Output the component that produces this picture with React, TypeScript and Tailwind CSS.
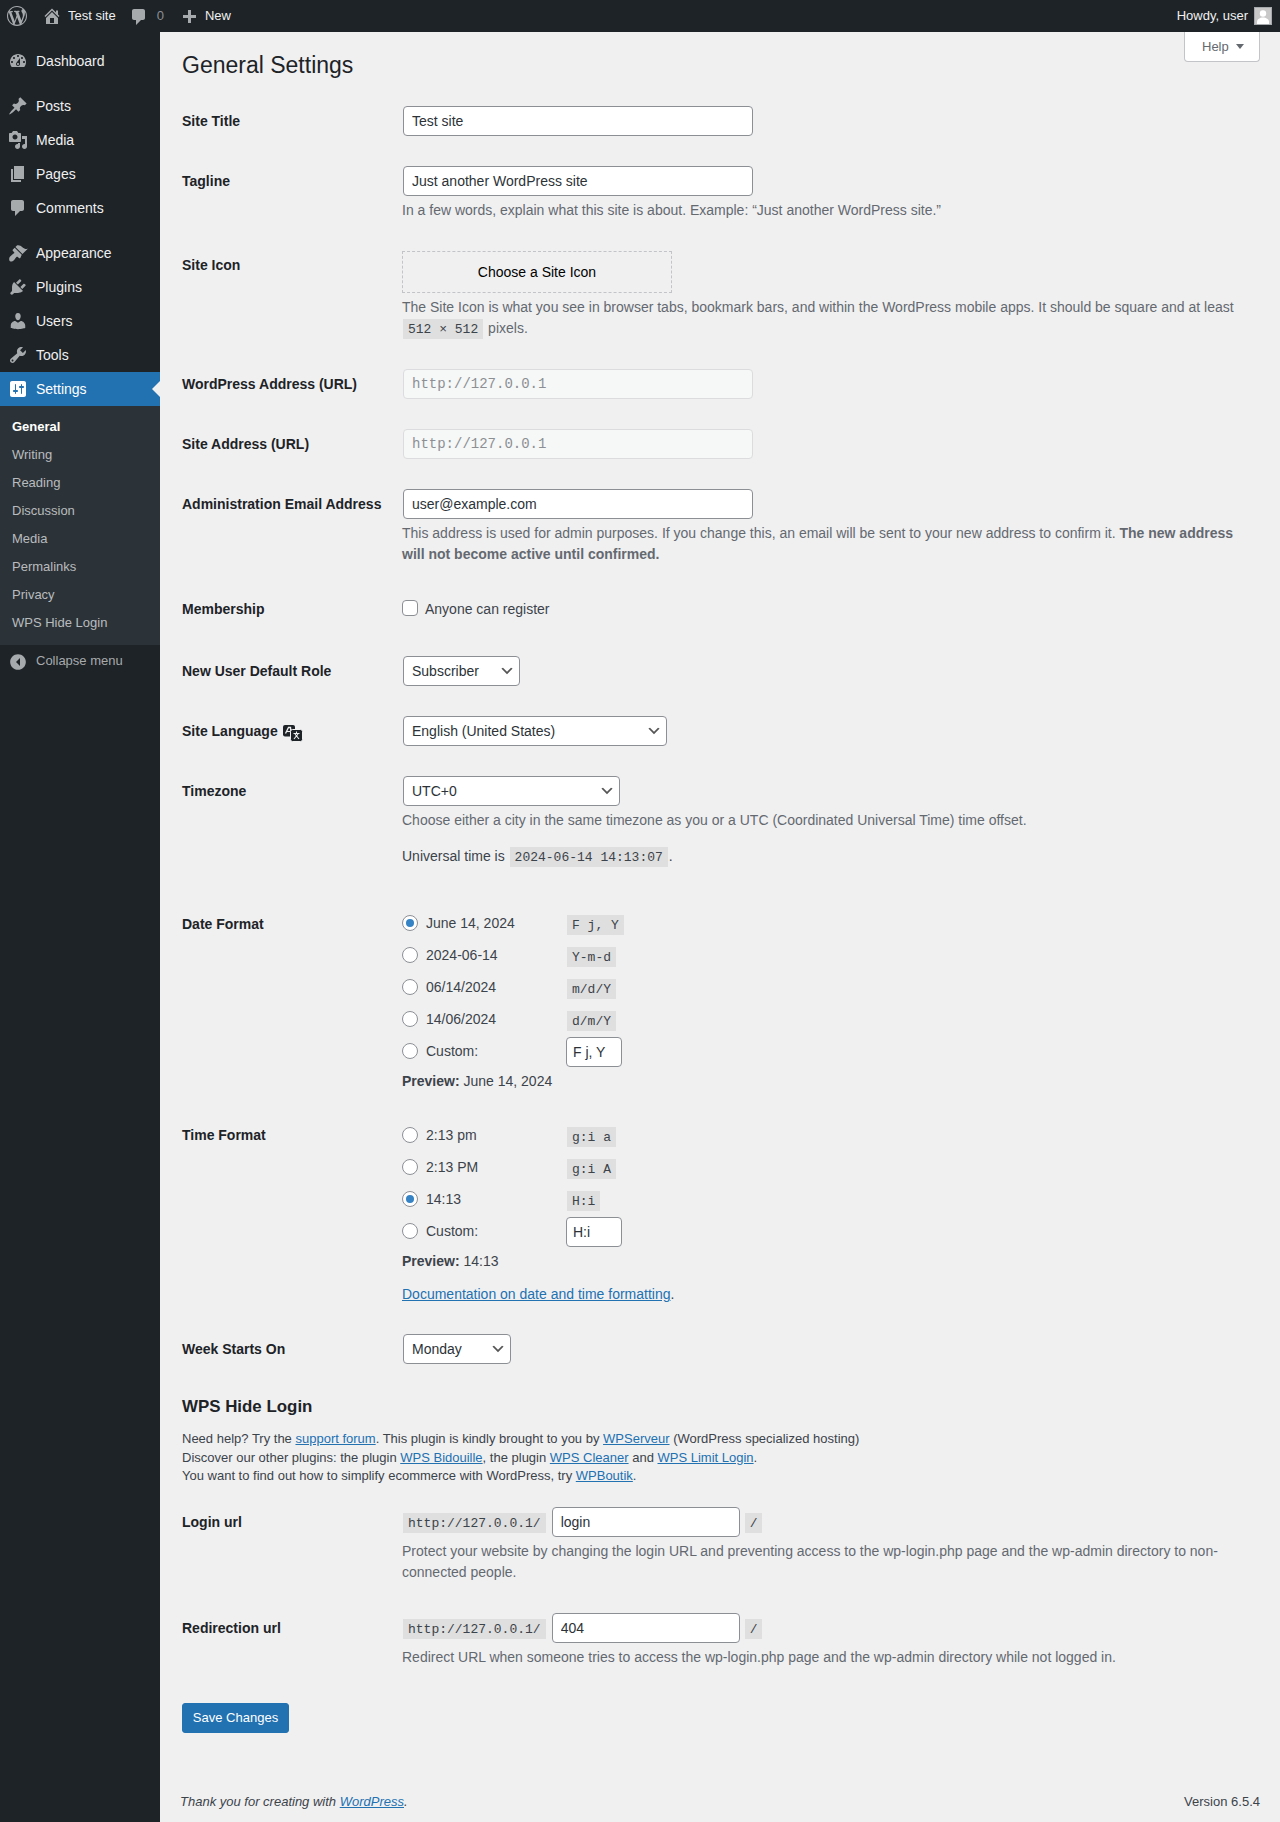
import type { ReactNode } from "react";

const icons: Record<string, string> = {
  wp: "M20 10c0-5.51-4.49-10-10-10C4.48 0 0 4.49 0 10c0 5.52 4.48 10 10 10 5.51 0 10-4.48 10-10zM7.78 15.37L4.37 6.22c.55-.02 1.17-.08 1.17-.08.5-.06.44-1.13-.06-1.11 0 0-1.45.11-2.37.11-.18 0-.37 0-.58-.01C4.12 2.69 6.89 1.06 10 1.06c2.32 0 4.43.89 6.02 2.33-.68-.11-1.64.38-1.64 1.57 0 .74.45 1.36.9 2.1.35.61.55 1.36.55 2.46 0 1.49-1.4 5-1.4 5l-3.03-8.37c.54-.02.82-.17.82-.17.5-.05.44-1.25-.06-1.22 0 0-1.44.12-2.38.12-.87 0-2.33-.12-2.33-.12-.5-.03-.56 1.2-.06 1.22l.92.08 1.26 3.41zM17.41 10c.24-.64.74-1.87.43-4.25.7 1.29 1.05 2.71 1.05 4.25 0 3.29-1.73 6.24-4.4 7.78.97-2.59 1.94-5.2 2.92-7.78zM6.1 18.09C3.12 16.65 1.06 13.57 1.06 10c0-1.31.23-2.51.72-3.63l4.32 11.72zm4.06-6.96l2.6 7.03.01.01c-.87.31-1.79.48-2.77.48-.82 0-1.62-.12-2.36-.34z",
  home: "M16 8.5l1.53 1.53-1.06 1.06L10 4.62l-6.47 6.47-1.06-1.06L10 2.5l4 4v-2h2v4zm-6-2.46l6 5.99V18H4v-5.97zM12 17v-5H8v5h4z",
  plus: "M17 9v3h-5v5H9v-5H4V9h5V4h3v5h5z",
  dashboard: "M3.76 16h12.48c1.1-1.37 1.76-3.11 1.76-5 0-4.42-3.58-8-8-8s-8 3.58-8 8c0 1.89.66 3.63 1.76 5zM10 4c.55 0 1 .45 1 1s-.45 1-1 1-1-.45-1-1 .45-1 1-1zM6 6c.55 0 1 .45 1 1s-.45 1-1 1-1-.45-1-1 .45-1 1-1zm8 0c.55 0 1 .45 1 1s-.45 1-1 1-1-.45-1-1 .45-1 1-1zm-5.37 5.55L12 7v6c0 1.1-.9 2-2 2s-2-.9-2-2c0-.57.24-1.08.63-1.45zM4 10c.55 0 1 .45 1 1s-.45 1-1 1-1-.45-1-1 .45-1 1-1zm12 0c.55 0 1 .45 1 1s-.45 1-1 1-1-.45-1-1 .45-1 1-1zm-5 3c0-.55-.45-1-1-1s-1 .45-1 1 .45 1 1 1 1-.45 1-1z",
  post: "M10.44 3.02l1.82-1.82 6.36 6.35-1.83 1.82c-1.05-.68-2.48-.57-3.41.36l-.75.75c-.92.93-1.04 2.35-.35 3.41l-1.83 1.82-2.41-2.41-2.8 2.79c-.42.42-3.38 2.71-3.8 2.29s1.86-3.39 2.28-3.81l2.79-2.79L4.1 9.36l1.83-1.82c1.05.69 2.48.57 3.4-.36l.75-.75c.93-.92 1.05-2.35.36-3.41z",
  media: "M13 11V4c0-.55-.45-1-1-1h-1.67L9 1H5L3.67 3H2c-.55 0-1 .45-1 1v7c0 .55.45 1 1 1h10c.55 0 1-.45 1-1zM7 4.5c1.38 0 2.5 1.12 2.5 2.5S8.38 9.5 7 9.5 4.5 8.38 4.5 7 5.62 4.5 7 4.5zM14 6h5v10.5c0 1.38-1.12 2.5-2.5 2.5S14 17.88 14 16.5s1.12-2.5 2.5-2.5c.17 0 .34.02.5.05V9h-3V6zm-4 8.05V13h2v3.5c0 1.38-1.12 2.5-2.5 2.5S7 17.88 7 16.5 8.12 14 9.5 14c.17 0 .34.02.5.05z",
  page: "M6 15V2h10v13H6zm-1 1h8v2H3V5h2v11z",
  comment: "M5 2h9c1.1 0 2 .9 2 2v7c0 1.1-.9 2-2 2h-2l-5 5v-5H5c-1.1 0-2-.9-2-2V4c0-1.1.9-2 2-2z",
  appearance: "M14.48 11.06L7.41 3.99l1.5-1.5c.5-.56 2.3-.47 3.51.32 1.21.8 1.43 1.28 2.91 2.1 1.18.64 2.45 1.26 4.45.85zm-.71.71L6.7 4.7 4.93 6.47c-.39.39-.39 1.02 0 1.41l1.06 1.06c.39.39.39 1.03 0 1.42-.6.6-1.43 1.11-2.21 1.69-.35.26-.7.53-1.01.84C1.43 13.23.78 15.78 1.4 17.5c.62 1.72 3.17 1.07 4.5-.26.31-.31.58-.66.84-1.01.58-.78 1.09-1.61 1.69-2.21.39-.39 1.03-.39 1.42 0l1.06 1.06c.39.39 1.02.39 1.41 0z",
  plugins: "M13.11 4.36L9.87 7.6 8 5.73l3.24-3.24c.35-.34 1.05-.2 1.56.32.52.51.66 1.21.31 1.55zm-8 1.77l.91-1.12 9.01 9.01-1.19.84c-.71.71-2.63 1.16-3.82 1.16H6.14L4.9 17.26c-.59.59-1.54.59-2.12 0-.59-.58-.59-1.53 0-2.12l1.24-1.24v-3.88c0-1.13.4-3.19 1.09-3.89zm7.26 3.97l3.24-3.24c.34-.35 1.04-.21 1.55.31.52.51.66 1.21.31 1.55l-3.24 3.25z",
  users: "M10 9.25c-2.27 0-2.73-3.44-2.73-3.44C7 4.02 7.82 2 9.97 2c2.16 0 2.98 2.02 2.71 3.81 0 0-.41 3.44-2.68 3.44zm0 2.57L12.72 10c2.39 0 4.52 2.33 4.52 4.53v2.49s-3.65 1.13-7.24 1.13c-3.65 0-7.24-1.13-7.24-1.13v-2.49c0-2.25 1.94-4.48 4.47-4.48z",
  tools: "M16.68 9.77c-1.34 1.34-3.3 1.67-4.95.99l-5.41 6.52c-.99.99-2.59.99-3.58 0s-.99-2.59 0-3.57l6.52-5.42c-.68-1.65-.35-3.61.99-4.95 1.28-1.28 3.12-1.62 4.72-1.06l-2.89 2.89 2.82 2.82 2.86-2.87c.53 1.58.18 3.39-1.08 4.65zM3.81 16.21c.4.39 1.04.39 1.43 0 .4-.4.4-1.04 0-1.43-.39-.4-1.03-.4-1.43 0-.39.39-.39 1.03 0 1.43z",
  settings: "M18 16V4c0-1.1-.9-2-2-2H4c-1.1 0-2 .9-2 2v12c0 1.1.9 2 2 2h12c1.1 0 2-.9 2-2zM8 11h1c.55 0 1 .45 1 1s-.45 1-1 1H8v1.5c0 .28-.22.5-.5.5s-.5-.22-.5-.5V13H6c-.55 0-1-.45-1-1s.45-1 1-1h1V5.5c0-.28.22-.5.5-.5s.5.22.5.5V11zm5-2h-1c-.55 0-1-.45-1-1s.45-1 1-1h1V5.5c0-.28.22-.5.5-.5s.5.22.5.5V7h1c.55 0 1 .45 1 1s-.45 1-1 1h-1v5.5c0 .28-.22.5-.5.5s-.5-.22-.5-.5V9z",
  collapse: "M10 2.16c4.33 0 7.84 3.51 7.84 7.84s-3.51 7.84-7.84 7.84S2.16 14.33 2.16 10 5.67 2.16 10 2.16zM12 14V6l-4 4z",
};

function Icon({ name, className }: { name: string; className?: string }) {
  return (
    <svg viewBox="0 0 20 20" className={className} fill="currentColor" fillRule="evenodd">
      <path d={icons[name]} />
    </svg>
  );
}

function TopBar() {
  return (
    <div className="h-8 bg-[#1d2327] text-[#f0f0f1] text-[13px] flex items-center justify-between pl-[7px] pr-2">
      <div className="flex items-center">
        <Icon name="wp" className="w-5 h-5 text-[#a7aaad]" />
        <Icon name="home" className="w-5 h-5 ml-[15px] text-[#a7aaad]" />
        <span className="ml-[6px]">Test site</span>
        <Icon name="comment" className="w-5 h-5 ml-[13px] mt-[2px] text-[#a7aaad]" />
        <span className="ml-[8px] text-[#8c8f94]">0</span>
        <Icon name="plus" className="w-5 h-5 ml-[15px] text-[#a7aaad]" />
        <span className="ml-[6px]">New</span>
      </div>
      <div className="flex items-center gap-[6px]">
        <span>Howdy, user</span>
        <svg viewBox="0 0 18 18" className="w-[18px] h-[18px]">
          <rect x="0.5" y="0.5" width="17" height="17" fill="#c8c8c8" stroke="#a7aaad" />
          <circle cx="9" cy="6.5" r="3.2" fill="#fff" />
          <path d="M3 17v-2c0-3 3-4.5 6-4.5s6 1.5 6 4.5v2z" fill="#fff" />
        </svg>
      </div>
    </div>
  );
}

function MenuItem({ icon, label, active }: { icon: string; label: string; active?: boolean }) {
  return (
    <div className={`relative h-[34px] flex items-center text-sm ${active ? "bg-[#2271b1] text-white" : "text-[#f0f0f1]"}`}>
      <span className="w-9 flex justify-center">
        <Icon name={icon} className={`w-5 h-5 ${active ? "text-white" : "text-[#a7aaad]"}`} />
      </span>
      <span>{label}</span>
      {active && (
        <span className="absolute right-0 top-[9px] border-y-8 border-r-8 border-y-transparent border-r-[#f0f0f1]" />
      )}
    </div>
  );
}

function Sidebar() {
  const sub = ["Writing", "Reading", "Discussion", "Media", "Permalinks", "Privacy", "WPS Hide Login"];
  return (
    <aside className="w-40 shrink-0 bg-[#1d2327] pt-3">
      <MenuItem icon="dashboard" label="Dashboard" />
      <div className="h-[11px]" />
      <MenuItem icon="post" label="Posts" />
      <MenuItem icon="media" label="Media" />
      <MenuItem icon="page" label="Pages" />
      <MenuItem icon="comment" label="Comments" />
      <div className="h-[11px]" />
      <MenuItem icon="appearance" label="Appearance" />
      <MenuItem icon="plugins" label="Plugins" />
      <MenuItem icon="users" label="Users" />
      <MenuItem icon="tools" label="Tools" />
      <MenuItem icon="settings" label="Settings" active />
      <div className="bg-[#2c3338] pt-[7px] pb-[9px] h-[239px] text-[13px] text-[#b8bcbf]">
        <div className="h-7 flex items-center px-3 font-bold text-white">General</div>
        {sub.map((s) => (
          <div key={s} className="h-7 flex items-center px-3">{s}</div>
        ))}
      </div>
      <div className="flex items-center h-[34px] text-[13px] text-[#a7aaad]">
        <span className="w-9 flex justify-center">
          <Icon name="collapse" className="w-5 h-5" />
        </span>
        <span className="-mt-[2px]">Collapse menu</span>
      </div>
    </aside>
  );
}

function Row({ label, after, children, className, labelClass }: { label: string; after?: ReactNode; children: ReactNode; className?: string; labelClass?: string }) {
  return (
    <div className={`flex ${className ?? ""}`}>
      <div className={`w-[210px] shrink-0 pb-5 pr-[10px] text-sm leading-[18.2px] font-bold text-[#1d2327] ${labelClass ?? "pt-[21px]"}`}>
        {label}
        {after}
      </div>
      <div className="flex-1 py-[15px] px-[10px] text-sm leading-[21px]">{children}</div>
    </div>
  );
}

function TextInput({ value, className }: { value: string; className?: string }) {
  return (
    <input
      readOnly
      value={value}
      className={`block mx-px h-[30px] px-2 rounded border border-[#8c8f94] bg-white text-sm text-[#2c3338] ${className ?? "w-[350px]"}`}
    />
  );
}

function UrlInput({ value }: { value: string }) {
  return (
    <input
      readOnly
      value={value}
      className="block mx-px w-[350px] h-[30px] px-2 rounded border border-[#dcdcde] bg-[#f6f7f7] text-sm text-[#8c8f94] font-['Liberation_Mono',monospace]"
    />
  );
}

function Select({ value, className }: { value: string; className: string }) {
  return (
    <div className={`relative mx-px h-[30px] ${className}`}>
      <select className="w-full h-full appearance-none pl-2 pr-6 rounded border border-[#8c8f94] bg-white text-sm text-[#2c3338]">
        <option>{value}</option>
      </select>
      <svg viewBox="0 0 20 20" className="absolute right-[5px] top-[7px] w-4 h-4 pointer-events-none" fill="#555">
        <path d="M5 6l5 5 5-5 2 1-7 7-7-7 2-1z" />
      </svg>
    </div>
  );
}

function Desc({ children }: { children: ReactNode }) {
  return <p className="mt-1 text-[#646970] text-sm leading-[21px]">{children}</p>;
}

function Code({ children, className }: { children: ReactNode; className?: string }) {
  return (
    <code className={`mx-px bg-[#dfdfdf] text-[#3c434a] pt-[3px] px-[5px] pb-[2px] text-[13px] leading-[15px] font-['Liberation_Mono',monospace] ${className ?? ""}`}>
      {children}
    </code>
  );
}

function Radio({ checked }: { checked?: boolean }) {
  return (
    <span className="w-4 h-4 shrink-0 rounded-full border border-[#8c8f94] bg-white flex items-center justify-center">
      {checked && <span className="w-2 h-2 rounded-full bg-[#3582c4]" />}
    </span>
  );
}

function FormatOption({ label, code, checked }: { label: string; code: string; checked?: boolean }) {
  return (
    <div className="flex items-center h-7 mb-1 text-[#3c434a]">
      <Radio checked={checked} />
      <span className="ml-2 w-[140px]">{label}</span>
      <Code className="mt-[4px]">{code}</Code>
    </div>
  );
}

function CustomOption({ value }: { value: string }) {
  return (
    <div className="flex items-center h-7 mb-1 text-[#3c434a]">
      <Radio />
      <span className="ml-2 w-[139px]">Custom:</span>
      <TextInput value={value} className="w-[56px] !px-[6px] mt-[2px]" />
    </div>
  );
}

function Lnk({ children }: { children: ReactNode }) {
  return <a className="text-[#2271b1] underline">{children}</a>;
}

function TranslateIcon() {
  return (
    <svg viewBox="0 0 20 20" className="inline-block w-5 h-5 ml-[5px] align-[-7px]">
      <rect x="0" y="2" width="12" height="11.5" rx="2" fill="#1d2327" />
      <path d="M2.5 10.5L5.5 4.5h2l.5 6" fill="none" stroke="#f0f0f1" strokeWidth="1.3" />
      <path d="M4 8.5h4" stroke="#f0f0f1" strokeWidth="1.1" />
      <rect x="7.5" y="6.5" width="12" height="12" rx="2" fill="#1d2327" stroke="#f0f0f1" />
      <path d="M13.5 8.5v1.500M10.500 10.500h6M15 11l-4 5M12 11l4 5" stroke="#f0f0f1" strokeWidth="1.1" fill="none" />
    </svg>
  );
}

function SettingsForm() {
  return (
    <div className="mt-[6.5px]">
      <Row label="Site Title">
        <TextInput value="Test site" />
      </Row>
      <Row label="Tagline">
        <TextInput value="Just another WordPress site" />
        <Desc>In a few words, explain what this site is about. Example: “Just another WordPress site.”</Desc>
      </Row>
      <Row label="Site Icon" labelClass="pt-5">
        <div className="w-[270px] h-[42px] border border-dashed border-[#c3c4c7] flex items-center justify-center text-black">
          Choose a Site Icon
        </div>
        <Desc>
          The Site Icon is what you see in browser tabs, bookmark bars, and within the WordPress mobile apps. It should be square and at least <Code>512 × 512</Code> pixels.
        </Desc>
      </Row>
      <Row label="WordPress Address (URL)">
        <UrlInput value="http://127.0.0.1" />
      </Row>
      <Row label="Site Address (URL)">
        <UrlInput value="http://127.0.0.1" />
      </Row>
      <Row label="Administration Email Address">
        <TextInput value="user@example.com" />
        <Desc>
          This address is used for admin purposes. If you change this, an email will be sent to your new address to confirm it. <strong>The new address will not become active until confirmed.</strong>
        </Desc>
      </Row>
      <Row label="Membership" labelClass="pt-5" className="h-[61px]">
        <div className="flex items-center h-[28px] -mt-[1px] text-[#3c434a]">
          <span className="w-4 h-4 rounded border border-[#8c8f94] bg-white" />
          <span className="ml-[7px] mt-[2px]">Anyone can register</span>
        </div>
      </Row>
      <Row label="New User Default Role">
        <Select value="Subscriber" className="w-[117px]" />
      </Row>
      <Row label="Site Language" after={<TranslateIcon />} className="h-[60px]">
        <Select value="English (United States)" className="w-[264px]" />
      </Row>
      <Row label="Timezone">
        <Select value="UTC+0" className="w-[217px]" />
        <Desc>Choose either a city in the same timezone as you or a UTC (Coordinated Universal Time) time offset.</Desc>
        <p className="mt-[15px] mb-[12px] text-[#3c434a]">
          Universal time is <Code>2024-06-14 14:13:07</Code>.
        </p>
      </Row>
      <Row label="Date Format">
        <FormatOption label="June 14, 2024" code="F j, Y" checked />
        <FormatOption label="2024-06-14" code="Y-m-d" />
        <FormatOption label="06/14/2024" code="m/d/Y" />
        <FormatOption label="14/06/2024" code="d/m/Y" />
        <CustomOption value="F j, Y" />
        <p className="mt-[6px] -mb-px text-[#3c434a]">
          <strong>Preview:</strong> June 14, 2024
        </p>
      </Row>
      <Row label="Time Format" labelClass="pt-5">
        <FormatOption label="2:13 pm" code="g:i a" />
        <FormatOption label="2:13 PM" code="g:i A" />
        <FormatOption label="14:13" code="H:i" checked />
        <CustomOption value="H:i" />
        <p className="mt-[6px] text-[#3c434a]">
          <strong>Preview:</strong> 14:13
        </p>
        <p className="mt-3 -mb-px text-[#3c434a]">
          <Lnk>Documentation on date and time formatting</Lnk>.
        </p>
      </Row>
      <Row label="Week Starts On">
        <Select value="Monday" className="w-[108px]" />
      </Row>
    </div>
  );
}

function UrlField({ value }: { value: string }) {
  return (
    <div className="flex items-center gap-1 h-[30px]">
      <Code className="mt-[2px]">http://127.0.0.1/</Code>
      <TextInput value={value} className="w-[188px]" />
      <Code className="mt-[2px] !ml-0">/</Code>
    </div>
  );
}

function HideLogin() {
  return (
    <div>
      <h2 className="text-[16.9px] leading-[23px] font-bold text-[#1d2327] mt-4">WPS Hide Login</h2>
      <p className="mt-3 text-[13px] leading-[18.2px] text-[#3c434a]">
        Need help? Try the <Lnk>support forum</Lnk>. This plugin is kindly brought to you by <Lnk>WPServeur</Lnk> (WordPress specialized hosting)
        <br />
        Discover our other plugins: the plugin <Lnk>WPS Bidouille</Lnk>, the plugin <Lnk>WPS Cleaner</Lnk> and <Lnk>WPS Limit Login</Lnk>.
        <br />
        You want to find out how to simplify ecommerce with WordPress, try <Lnk>WPBoutik</Lnk>.
      </p>
      <div className="mt-[7px]">
        <Row label="Login url">
          <UrlField value="login" />
          <Desc>Protect your website by changing the login URL and preventing access to the wp-login.php page and the wp-admin directory to non-connected people.</Desc>
        </Row>
        <Row label="Redirection url">
          <UrlField value="404" />
          <Desc>Redirect URL when someone tries to access the wp-login.php page and the wp-admin directory while not logged in.</Desc>
        </Row>
      </div>
      <button className="mt-5 h-[30px] w-[107px] rounded-[3px] bg-[#2271b1] border border-[#2271b1] text-white text-[13px]">
        Save Changes
      </button>
    </div>
  );
}

export default function App() {
  return (
    <div className="min-h-[1822px] flex flex-col bg-[#f0f0f1] font-['Liberation_Sans',Arial,sans-serif] text-[#3c434a]">
      <TopBar />
      <div className="flex flex-1">
        <Sidebar />
        <main className="relative flex-1 flex flex-col pl-[22px] pr-5 pt-[10px]">
          <div className="absolute right-5 top-0 w-[76px] h-[30px] pl-[17px] bg-white border border-t-0 border-[#c3c4c7] rounded-b text-[13px] text-[#646970] flex items-center gap-[7px]">
            Help
            <span className="border-x-4 border-t-[5px] border-x-transparent border-t-[#646970]" />
          </div>
          <h1 className="text-[23px] leading-[29.9px] font-normal text-[#1d2327] pt-[9px] pb-1 box-content">General Settings</h1>
          <SettingsForm />
          <HideLogin />
          <footer className="mt-auto -ml-[2px] pb-[11px] flex justify-between text-[13px] leading-[18px]">
            <span className="italic">
              Thank you for creating with <Lnk>WordPress</Lnk>.
            </span>
            <span>Version 6.5.4</span>
          </footer>
        </main>
      </div>
    </div>
  );
}
